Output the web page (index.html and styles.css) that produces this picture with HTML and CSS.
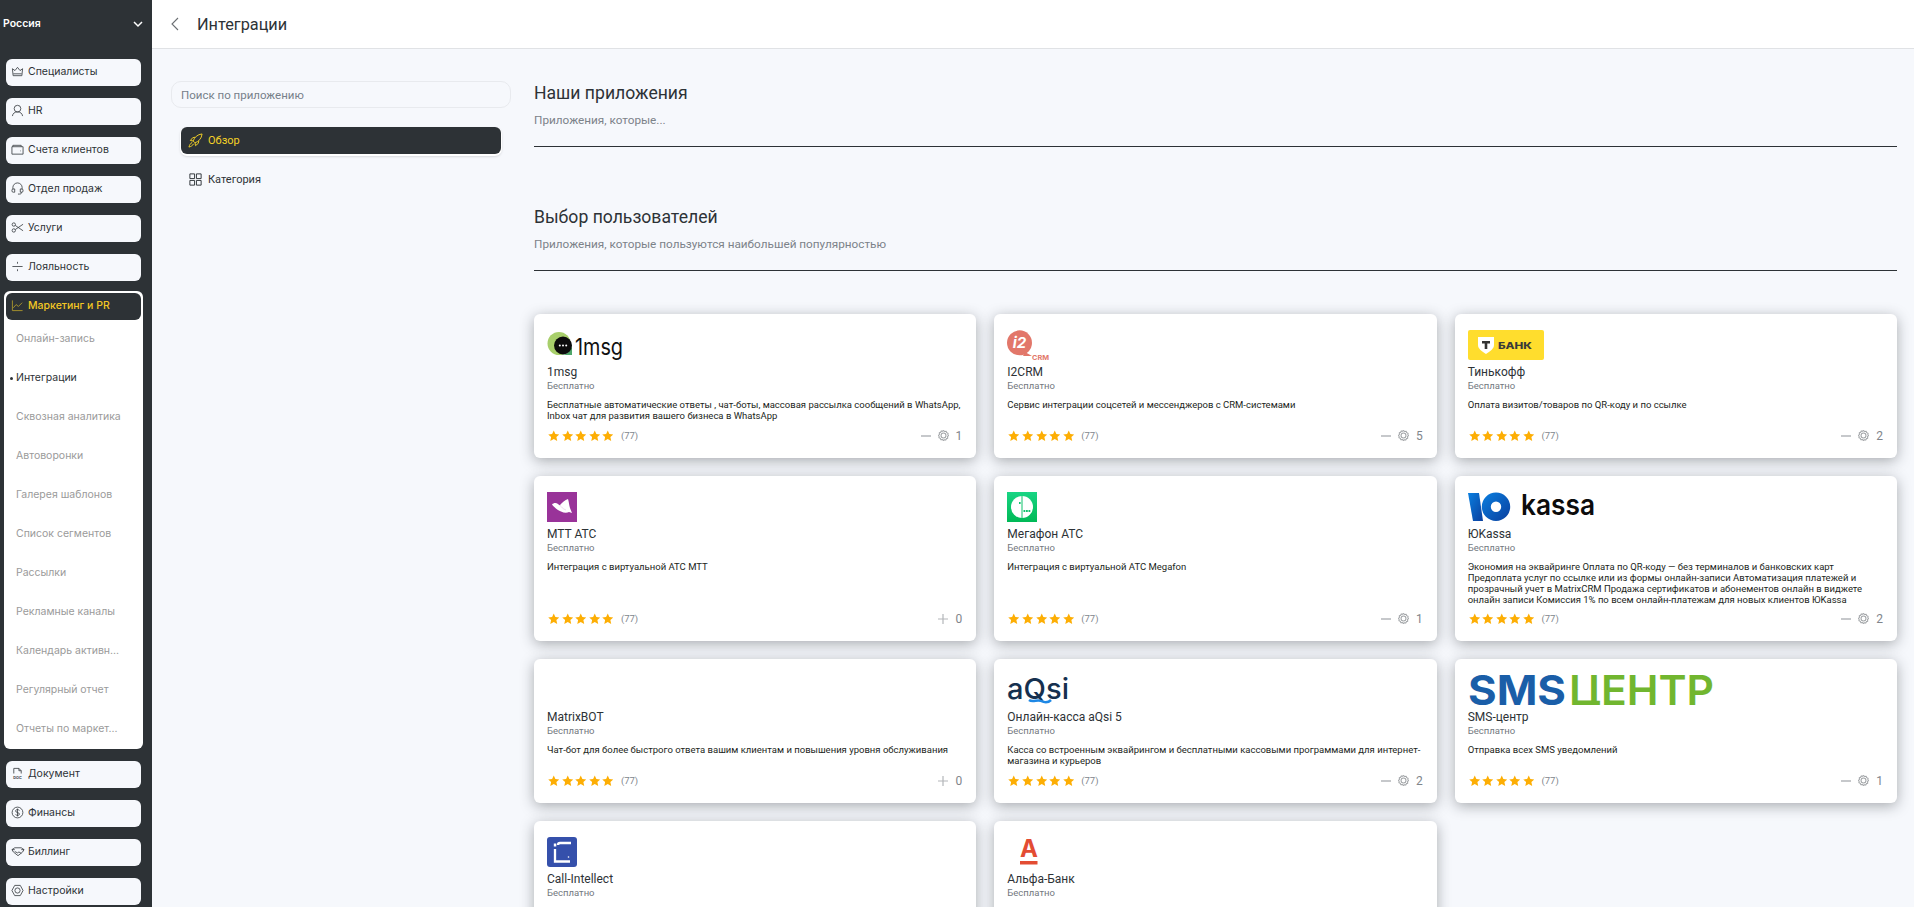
FILE: index.html
```html
<!DOCTYPE html>
<html lang="ru">
<head>
  <meta charset="UTF-8" />
  <title>Интеграции</title>
  <link rel="stylesheet" href="styles.css">
</head>
<body>
  <svg class="sprite" width="0" height="0">
    <symbol id="star" viewBox="0 0 24 24"><path d="M12 1l3.400 7.400 8.100.9-6 5.500 1.700 8L12 18.700 4.800 22.800l1.700-8-6-5.500 8.100-.9z"/></symbol>
    <symbol id="gear" viewBox="0 0 16 16"><path d="M8 .8l1.700 1.300 2.100-.2.900 1.900 1.900.9-.2 2.100L15.200 8l-1.300 1.700.2 2.100-1.900.9-.9 1.900-2.100-.2L8 15.200l-1.700-1.300-2.100.2-.9-1.900-1.900-.9.2-2.100L.8 8l1.300-1.700-.2-2.100 1.900-.9.9-1.900 2.100.2z" fill="none" stroke="currentColor" stroke-width="1.500"/><circle cx="8" cy="8" r="3.600" fill="none" stroke="currentColor" stroke-width="1.500"/></symbol>
  </svg>

  <div class="app">
    <aside class="sidebar">
      <div class="region">
        <span>Россия</span>
        <svg class="region-arrow" viewBox="0 0 12 12"><path d="M2 4l4 4 4-4"/></svg>
      </div>
      <nav class="side-nav">
        <a class="side-item">
          <svg class="side-icon" viewBox="0 0 14 14"><path d="M1.500 4l2.800 2L7 2.500 9.700 6l2.800-2-.8 7.500H2.300zM2.500 9.500h9"/></svg>
          Специалисты
        </a>
        <a class="side-item">
          <svg class="side-icon" viewBox="0 0 14 14"><circle cx="7" cy="5" r="3.600"/><path d="M1.500 13c.5-3 2.500-4.500 5.500-4.500s5 1.500 5.500 4.500"/></svg>
          HR
        </a>
        <a class="side-item">
          <svg class="side-icon" viewBox="0 0 14 14"><path d="M2 4V2.500h9V4M1 4h12v8H1zM10 8.500h.6"/></svg>
          Счета клиентов
        </a>
        <a class="side-item">
          <svg class="side-icon" viewBox="0 0 14 14"><path d="M2 8V6a5 5 0 0 1 10 0v2M2 7.500h2v3.500H2.500A1.500 1.500 0 0 1 1 9.500 2 2 0 0 1 2 7.500zM12 7.500h-2v3.500h1.500A1.500 1.500 0 0 0 13 9.500a2 2 0 0 0-1-2zM11.500 11c0 1.500-1 2-2.500 2H7.500"/></svg>
          Отдел продаж
        </a>
        <a class="side-item">
          <svg class="side-icon" viewBox="0 0 14 14"><circle cx="3" cy="3.800" r="1.800"/><circle cx="3" cy="10.200" r="1.800"/><path d="M4.600 4.800L13 10.500M4.600 9.200L13 3.500"/></svg>
          Услуги
        </a>
        <a class="side-item">
          <svg class="side-icon" viewBox="0 0 14 14"><path d="M1.500 7h11M7 2v2M7 10v2"/></svg>
          Лояльность
        </a>

        <div class="side-group">
          <a class="side-item side-item-open">
            <svg class="side-icon" viewBox="0 0 14 14"><path d="M1.500 1.500v11h11M2.500 9.500l3-3.500 2.500 2 4-4"/></svg>
            Маркетинг и PR
          </a>
          <a class="sub-item">Онлайн-запись</a>
          <a class="sub-item sub-item-active">Интеграции</a>
          <a class="sub-item">Сквозная аналитика</a>
          <a class="sub-item">Автоворонки</a>
          <a class="sub-item">Галерея шаблонов</a>
          <a class="sub-item">Список сегментов</a>
          <a class="sub-item">Рассылки</a>
          <a class="sub-item">Рекламные каналы</a>
          <a class="sub-item">Календарь активн...</a>
          <a class="sub-item">Регулярный отчет</a>
          <a class="sub-item">Отчеты по маркет...</a>
        </div>

        <a class="side-item">
          <svg class="side-icon" viewBox="0 0 14 14"><path d="M3 7V1.500h5.500L11 4v3M8.500 1.500V4H11"/><text class="doc-label" x="7" y="12.800" text-anchor="middle">DOC</text></svg>
          Документ
        </a>
        <a class="side-item">
          <svg class="side-icon" viewBox="0 0 14 14"><circle cx="7" cy="7" r="5.800"/><path d="M9 5c-.4-.9-1.100-1.200-2-1.200-1.200 0-2 .6-2 1.600 0 2.200 4 1.100 4 3.200 0 1-.8 1.600-2 1.600-.9 0-1.700-.4-2-1.200M7 2.800v8.400"/></svg>
          Финансы
        </a>
        <a class="side-item">
          <svg class="side-icon side-icon-wide" viewBox="0 0 14 14"><path d="M.5 5L3.500 3h7l3 2-1.500 2.500-5 4-5-4zM3.500 7l3 1.500 1.500-1 2.500 1.500M.5 5h3M10.500 5h3"/></svg>
          Биллинг
        </a>
        <a class="side-item">
          <svg class="side-icon" viewBox="0 0 14 14"><path d="M4 1.500h6L13 7l-3 5.500H4L1 7z"/><circle cx="7" cy="7" r="2.800"/></svg>
          Настройки
        </a>
      </nav>
    </aside>

    <div class="content">
      <header class="topbar">
        <svg class="back" viewBox="0 0 8 14"><path d="M7 1L1 7l6 6"/></svg>
        <h1>Интеграции</h1>
      </header>

      <div class="page">
        <div class="filter">
          <input class="search" type="text" placeholder="Поиск по приложению" />
          <ul class="filter-list">
            <li class="filter-item filter-item-active">
              <svg class="filter-icon" viewBox="0 0 16 16"><path d="M5.500 8.500C7 4.500 10 1.500 15 1c-.5 5-3.500 8-7.500 9.500zM5.500 8.500L2.500 8l2.500-3 2.500-.5M7.500 10.500l.5 3 3-2.500.5-2.500M4.500 10c-2 1-3 3-3.500 5 2-.5 4-1.500 5-3.500"/></svg>
              Обзор
            </li>
            <li class="filter-item">
              <svg class="filter-icon" viewBox="0 0 16 16"><path d="M2 2h5v5H2zM9 2h5v5H9zM2 9h5v5H2zM9 9h5v5H9z"/></svg>
              Категория
            </li>
          </ul>
        </div>

        <main class="apps">
          <section class="apps-head">
            <h2>Наши приложения</h2>
            <p>Приложения, которые...</p>
          </section>
          <section class="apps-head apps-head-second">
            <h2>Выбор пользователей</h2>
            <p>Приложения, которые пользуются наибольшей популярностью</p>
          </section>

          <div class="cards">
            <article class="card">
              <svg class="logo" width="80" height="30" viewBox="0 0 80 30">
                <circle cx="12" cy="13.500" r="11.500" fill="#a8cf6b"/>
                <path d="M14 25a11 11 0 0 0 11-11v11z" fill="#4ea66a"/>
                <circle cx="16" cy="15.500" r="9" fill="#0c0c0c"/>
                <circle cx="12.800" cy="15.500" r="1" fill="#fff"/><circle cx="16" cy="15.500" r="1" fill="#fff"/><circle cx="19.200" cy="15.500" r="1" fill="#fff"/>
                <text class="logo-1msg" x="28" y="25" textLength="48" lengthAdjust="spacingAndGlyphs">1msg</text>
              </svg>
              <h3>1msg</h3>
              <div class="price">Бесплатно</div>
              <p class="desc">Бесплатные автоматические ответы , чат-боты, массовая рассылка сообщений в WhatsApp, Inbox чат для развития вашего бизнеса в WhatsApp</p>
              <div class="card-foot">
                <span class="stars"><svg><use href="#star"/></svg><svg><use href="#star"/></svg><svg><use href="#star"/></svg><svg><use href="#star"/></svg><svg><use href="#star"/></svg></span>
                <span class="votes">(77)</span>
                <span class="dash"></span>
                <svg class="gear"><use href="#gear"/></svg>
                <span class="count">1</span>
              </div>
            </article>

            <article class="card">
              <svg class="logo" width="45" height="30" viewBox="0 0 45 30">
                <circle cx="12.500" cy="12.800" r="12.500" fill="#e2776a"/>
                <path d="M18 22l7 4h-9z" fill="#e2776a"/>
                <text class="logo-i2" x="12.500" y="18" text-anchor="middle">i2</text>
                <text class="logo-crm" x="25" y="30" textLength="17" lengthAdjust="spacingAndGlyphs">CRM</text>
              </svg>
              <h3>I2CRM</h3>
              <div class="price">Бесплатно</div>
              <p class="desc">Сервис интеграции соцсетей и мессенджеров с CRM-системами</p>
              <div class="card-foot">
                <span class="stars"><svg><use href="#star"/></svg><svg><use href="#star"/></svg><svg><use href="#star"/></svg><svg><use href="#star"/></svg><svg><use href="#star"/></svg></span>
                <span class="votes">(77)</span>
                <span class="dash"></span>
                <svg class="gear"><use href="#gear"/></svg>
                <span class="count">5</span>
              </div>
            </article>

            <article class="card">
              <svg class="logo" width="76" height="30" viewBox="0 0 76 30">
                <rect width="76" height="30" rx="2" fill="#ffdd2d"/>
                <path d="M10 7h16v8c0 4-4 6-8 9-4-3-8-5-8-9z" fill="#fff"/>
                <path d="M14 11h8v2.500h-2.700V19h-2.600v-5.500H14z" fill="#333"/>
                <text class="logo-tbank" x="30" y="18.500" textLength="34" lengthAdjust="spacingAndGlyphs">БАНК</text>
              </svg>
              <h3>Тинькофф</h3>
              <div class="price">Бесплатно</div>
              <p class="desc">Оплата визитов/товаров по QR-коду и по ссылке</p>
              <div class="card-foot">
                <span class="stars"><svg><use href="#star"/></svg><svg><use href="#star"/></svg><svg><use href="#star"/></svg><svg><use href="#star"/></svg><svg><use href="#star"/></svg></span>
                <span class="votes">(77)</span>
                <span class="dash"></span>
                <svg class="gear"><use href="#gear"/></svg>
                <span class="count">2</span>
              </div>
            </article>

            <article class="card">
              <svg class="logo" width="30" height="30" viewBox="0 0 30 30">
                <rect width="30" height="30" fill="#993399"/>
                <path d="M5 12.500C6.500 11 9 10.500 11 12c1 1 1.500 1.500 2 1 2-2.500 5-5 8-6 1 3 1 6 2 9l2 5-3-1c-2 1-5 1-8-.5-4-1.500-7-4.500-9-7z" fill="#fff"/>
                <path d="M13 13c1 2 3 4 6 5" fill="none" stroke="#e3c4e3" stroke-width=".6"/>
              </svg>
              <h3>МТТ АТС</h3>
              <div class="price">Бесплатно</div>
              <p class="desc">Интеграция с виртуальной АТС МТТ</p>
              <div class="card-foot">
                <span class="stars"><svg><use href="#star"/></svg><svg><use href="#star"/></svg><svg><use href="#star"/></svg><svg><use href="#star"/></svg><svg><use href="#star"/></svg></span>
                <span class="votes">(77)</span>
                <svg class="plus" viewBox="0 0 10 10"><path d="M5 0v10M0 5h10"/></svg>
                <span class="count">0</span>
              </div>
            </article>

            <article class="card">
              <svg class="logo" width="30" height="30" viewBox="0 0 30 30">
                <defs><linearGradient id="mgf" x1="0" y1="0" x2="0" y2="1"><stop offset="0" stop-color="#18d584"/><stop offset="1" stop-color="#00b956"/></linearGradient></defs>
                <rect width="30" height="30" fill="url(#mgf)"/>
                <circle cx="15" cy="15" r="11" fill="#fff"/>
                <path d="M15 4v22" stroke="#0fc26d" stroke-width="1" fill="none"/>
                <rect x="12" y="10" width="1.600" height="2" fill="#0fc26d"/>
                <rect x="16.500" y="18" width="1.800" height="2" fill="#0fc26d"/>
                <rect x="19" y="18" width="1.800" height="2" fill="#0fc26d"/>
                <rect x="21.500" y="18" width="1.800" height="2" fill="#0fc26d"/>
              </svg>
              <h3>Мегафон АТС</h3>
              <div class="price">Бесплатно</div>
              <p class="desc">Интеграция с виртуальной АТС Megafon</p>
              <div class="card-foot">
                <span class="stars"><svg><use href="#star"/></svg><svg><use href="#star"/></svg><svg><use href="#star"/></svg><svg><use href="#star"/></svg><svg><use href="#star"/></svg></span>
                <span class="votes">(77)</span>
                <span class="dash"></span>
                <svg class="gear"><use href="#gear"/></svg>
                <span class="count">1</span>
              </div>
            </article>

            <article class="card">
              <svg class="logo" width="128" height="30" viewBox="0 0 128 30">
                <defs><linearGradient id="yoo" x1="0" y1="0" x2="1" y2="1"><stop offset="0" stop-color="#0a7fe0"/><stop offset="1" stop-color="#0a3f9e"/></linearGradient></defs>
                <path d="M0 1h11l4 28H5z" fill="url(#yoo)"/>
                <path d="M28 .5a14.200 14.200 0 1 1-14.200 14.200A14.200 14.200 0 0 1 28 .5zm0 9a5.200 5.200 0 1 0 5.200 5.200A5.200 5.200 0 0 0 28 9.500z" fill="url(#yoo)"/>
                <text class="logo-kassa" x="53" y="23" textLength="74" lengthAdjust="spacingAndGlyphs">kassa</text>
              </svg>
              <h3>ЮKassa</h3>
              <div class="price">Бесплатно</div>
              <p class="desc">Экономия на эквайринге Оплата по QR-коду — без терминалов и банковских карт Предоплата услуг по ссылке или из формы онлайн-записи Автоматизация платежей и прозрачный учет в MatrixCRM Продажа сертификатов и абонементов онлайн в виджете онлайн записи Комиссия 1% по всем онлайн-платежам для новых клиентов ЮKassa</p>
              <div class="card-foot">
                <span class="stars"><svg><use href="#star"/></svg><svg><use href="#star"/></svg><svg><use href="#star"/></svg><svg><use href="#star"/></svg><svg><use href="#star"/></svg></span>
                <span class="votes">(77)</span>
                <span class="dash"></span>
                <svg class="gear"><use href="#gear"/></svg>
                <span class="count">2</span>
              </div>
            </article>

            <article class="card">
              <div class="logo logo-empty"></div>
              <h3>MatrixBOT</h3>
              <div class="price">Бесплатно</div>
              <p class="desc">Чат-бот для более быстрого ответа вашим клиентам и повышения уровня обслуживания</p>
              <div class="card-foot">
                <span class="stars"><svg><use href="#star"/></svg><svg><use href="#star"/></svg><svg><use href="#star"/></svg><svg><use href="#star"/></svg><svg><use href="#star"/></svg></span>
                <span class="votes">(77)</span>
                <svg class="plus" viewBox="0 0 10 10"><path d="M5 0v10M0 5h10"/></svg>
                <span class="count">0</span>
              </div>
            </article>

            <article class="card">
              <svg class="logo" width="64" height="30" viewBox="0 0 64 30">
                <text class="logo-aqsi" x="0" y="24" textLength="62" lengthAdjust="spacingAndGlyphs">aQsi</text>
                <path d="M22 25c4 3 8-1 12 1s7 2 10-1" fill="none" stroke="#1e88e5" stroke-width="2.500"/>
              </svg>
              <h3>Онлайн-касса aQsi 5</h3>
              <div class="price">Бесплатно</div>
              <p class="desc">Касса со встроенным эквайрингом и бесплатными кассовыми программами для интернет-магазина и курьеров</p>
              <div class="card-foot">
                <span class="stars"><svg><use href="#star"/></svg><svg><use href="#star"/></svg><svg><use href="#star"/></svg><svg><use href="#star"/></svg><svg><use href="#star"/></svg></span>
                <span class="votes">(77)</span>
                <span class="dash"></span>
                <svg class="gear"><use href="#gear"/></svg>
                <span class="count">2</span>
              </div>
            </article>

            <article class="card">
              <svg class="logo" width="246" height="30" viewBox="0 0 246 30">
                <text class="logo-sms" x="0" y="30" textLength="98" lengthAdjust="spacingAndGlyphs">SMS</text>
                <text class="logo-center" x="101" y="30" textLength="145" lengthAdjust="spacingAndGlyphs">ЦЕНТР</text>
              </svg>
              <h3>SMS-центр</h3>
              <div class="price">Бесплатно</div>
              <p class="desc">Отправка всех SMS уведомлений</p>
              <div class="card-foot">
                <span class="stars"><svg><use href="#star"/></svg><svg><use href="#star"/></svg><svg><use href="#star"/></svg><svg><use href="#star"/></svg><svg><use href="#star"/></svg></span>
                <span class="votes">(77)</span>
                <span class="dash"></span>
                <svg class="gear"><use href="#gear"/></svg>
                <span class="count">1</span>
              </div>
            </article>

            <article class="card">
              <svg class="logo" width="30" height="30" viewBox="0 0 30 30">
                <rect width="30" height="30" rx="3" fill="#3550ab"/>
                <rect x="6.800" y="6.500" width="2.500" height="3" fill="#fff"/>
                <path d="M8 12v12.500h15M24 6H13c-1 0-2 1-2 2" fill="none" stroke="#fff" stroke-width="2.300"/>
                <circle cx="21.500" cy="20" r=".8" fill="#fff"/>
              </svg>
              <h3>Call-Intellect</h3>
              <div class="price">Бесплатно</div>
            </article>

            <article class="card">
              <svg class="logo" width="45" height="30" viewBox="0 0 45 30">
                <text class="logo-alfa" x="22" y="20" text-anchor="middle">А</text>
                <rect x="13" y="24" width="17.500" height="3.500" fill="#e34c33"/>
              </svg>
              <h3>Альфа-Банк</h3>
              <div class="price">Бесплатно</div>
            </article>
          </div>
        </main>
      </div>
    </div>
  </div>
</body>
</html>
```

FILE: styles.css
```css
* {
  box-sizing: border-box;
}

html, body {
  height: 100%;
}

body {
  margin: 0;
  overflow: hidden;
  background-color: #f6f8fc;
  color: #2d3236;
  font-family: 'Roboto', sans-serif;
}

.sprite {
  position: absolute;
}

.app {
  display: flex;
  height: 100vh;
  overflow: hidden;
}

/* sidebar */
.sidebar {
  flex: 0 0 152px;
  background-color: #2d3236;
  font-family: 'Inter', sans-serif;
}

.region {
  display: flex;
  align-items: center;
  justify-content: space-between;
  height: 47px;
  padding: 0 8px 0 3px;
  color: #fff;
  font-size: 10.5px;
  font-weight: 600;
}

.region-arrow {
  width: 12px;
  height: 12px;
  fill: none;
  stroke: #fff;
  stroke-width: 1.5;
}

.side-nav {
  display: flex;
  flex-direction: column;
  gap: 12px;
  width: 147px;
  margin-top: 12px;
  padding: 0 6px;
}

.side-item {
  display: flex;
  flex: 0 0 27px;
  align-items: center;
  gap: 4px;
  height: 27px;
  padding: 0 0 2px 5px;
  border-radius: 6px;
  background-color: #f6f8fc;
  color: #2d3236;
  font-size: 10.5px;
  white-space: nowrap;
}

.side-icon {
  flex: 0 0 13px;
  width: 13px;
  height: 13px;
  fill: none;
  stroke: #3b4045;
  stroke-width: 0.9;
}

.side-icon-wide {
  flex-basis: 14px;
  width: 14px;
  margin-right: -1px;
}

.doc-label {
  fill: #3b4045;
  stroke: none;
  font-size: 4px;
  font-weight: 700;
}

.side-group {
  margin: -2px -2px 0;
  padding-top: 2px;
  border-radius: 6px;
  background-color: #fff;
}

.side-group .side-item {
  margin: 0 2px;
}

.side-item-open {
  background-color: #2d3236;
  color: #f3c723;
  font-weight: 500;
}

.side-item-open .side-icon {
  stroke: #b79f2c;
}

.sub-item {
  position: relative;
  display: flex;
  align-items: center;
  height: 39px;
  padding: 0 0 2px 12px;
  color: #9a9a9a;
  font-size: 10.5px;
  white-space: nowrap;
}

.sub-item-active {
  color: #2d3236;
}

.sub-item-active::before {
  content: "";
  position: absolute;
  left: 6px;
  top: 18px;
  width: 3px;
  height: 3px;
  border-radius: 50%;
  background-color: #2d3236;
}

/* top bar */
.content {
  flex: 1;
  min-width: 0;
}

.topbar {
  display: flex;
  align-items: center;
  height: 49px;
  padding-left: 19px;
  border-bottom: 1px solid #e0e2e5;
  background-color: #fff;
}

.back {
  width: 8px;
  height: 14px;
  margin-right: 18px;
  fill: none;
  stroke: #6b6f73;
  stroke-width: 1.1;
}

.topbar h1 {
  margin: 0;
  color: #2d3236;
  font-size: 16.3px;
  font-weight: 400;
}

.page {
  display: flex;
  gap: 23px;
  padding: 32px 17px 0 19px;
}

/* left filter */
.filter {
  flex: 0 0 340px;
}

.search {
  display: block;
  width: 100%;
  height: 27px;
  padding: 0 9px;
  border: 1px solid #e8eaee;
  border-radius: 10px;
  outline: none;
  background: transparent;
  font-family: 'Roboto', sans-serif;
  font-size: 11.5px;
}

.search::placeholder {
  color: #77808a;
  opacity: 1;
}

.filter-list {
  margin: 19px 10px 0;
  padding: 0;
  list-style: none;
}

.filter-item {
  display: flex;
  align-items: center;
  gap: 5px;
  height: 27px;
  margin-bottom: 12px;
  padding-left: 7px;
  border-radius: 6px;
  color: #2d3236;
  font-size: 11px;
}

.filter-item-active {
  background-color: #2d3236;
  box-shadow: 0 1px 0 1px #fff, 0 2px 3px rgba(0, 0, 0, 0.25);
  color: #f5d327;
}

.filter-icon {
  width: 15px;
  height: 15px;
  fill: none;
  stroke: currentColor;
  stroke-width: 1;
}

/* right side */
.apps {
  flex: 1;
  min-width: 0;
}

.apps-head {
  height: 66px;
  border-bottom: 1px solid #2d3236;
}

.apps-head h2 {
  margin: 0;
  color: #2d3236;
  font-size: 17.6px;
  font-weight: 400;
  line-height: 24px;
}

.apps-head p {
  margin: 8px 0 0;
  color: #7c8289;
  font-size: 11.75px;
  line-height: 14px;
}

.apps-head-second {
  margin-top: 58px;
}

.cards {
  display: grid;
  grid-template-columns: repeat(3, 1fr);
  gap: 18px;
  margin-top: 43px;
}

.card {
  display: flex;
  flex-direction: column;
  min-height: 144px;
  padding: 16px 14px 14.5px 13px;
  border-radius: 6px;
  background-color: #fff;
  box-shadow: 0 3px 14px rgba(40, 45, 50, 0.38);
}

.logo {
  display: block;
  flex: 0 0 30px;
  height: 30px;
}

.logo-empty {
  width: 30px;
}

.logo-1msg {
  fill: #111;
  font-family: 'Inter', sans-serif;
  font-size: 23px;
  font-weight: 400;
}

.logo-i2 {
  fill: #fff;
  font-family: 'Inter', sans-serif;
  font-size: 15px;
  font-style: italic;
  font-weight: 700;
}

.logo-crm {
  fill: #e2776a;
  font-family: 'Inter', sans-serif;
  font-size: 6.5px;
  font-weight: 700;
}

.logo-tbank {
  fill: #3a3a3a;
  font-family: 'Inter', sans-serif;
  font-size: 9.5px;
  font-weight: 800;
}

.logo-kassa {
  fill: #0c0c0c;
  font-family: 'Inter', sans-serif;
  font-size: 29px;
  font-weight: 600;
}

.logo-aqsi {
  fill: #16304f;
  font-family: 'Inter', sans-serif;
  font-size: 29px;
  font-weight: 500;
}

.logo-sms {
  fill: #1a5ea8;
  font-family: 'Inter', sans-serif;
  font-size: 41px;
  font-weight: 700;
}

.logo-center {
  fill: #71b62f;
  font-family: 'Inter', sans-serif;
  font-size: 41px;
  font-weight: 600;
}

.logo-alfa {
  fill: #e34c33;
  font-family: 'Inter', sans-serif;
  font-size: 24px;
  font-weight: 700;
}

.card h3 {
  margin: 4px 0 0;
  color: #2d3236;
  font-size: 12px;
  font-weight: 400;
  line-height: 16px;
}

.price {
  color: #72787e;
  font-size: 9.5px;
  line-height: 12px;
}

.desc {
  margin: 6.5px 0 6px;
  color: #1c1f22;
  font-size: 9.5px;
  line-height: 11px;
}

.card-foot {
  display: flex;
  align-items: center;
  height: 16px;
  margin-top: auto;
}

.stars {
  display: flex;
  gap: 2.1px;
  margin-left: 1px;
}

.stars svg {
  width: 11.5px;
  height: 11.5px;
  fill: #fdae04;
}

.votes {
  margin-left: 7px;
  margin-right: auto;
  color: #81878d;
  font-size: 9.5px;
}

.dash {
  width: 10px;
  height: 2px;
  margin-right: 7px;
  background-color: #c6c8cb;
}

.gear {
  width: 11px;
  height: 11px;
  margin-right: 7px;
  color: #a0a3a6;
}

.plus {
  width: 10px;
  height: 10px;
  margin-right: 8px;
  fill: none;
  stroke: #b3b6b9;
  stroke-width: 1.2;
}

.count {
  color: #7f858b;
  font-size: 12px;
}
```
